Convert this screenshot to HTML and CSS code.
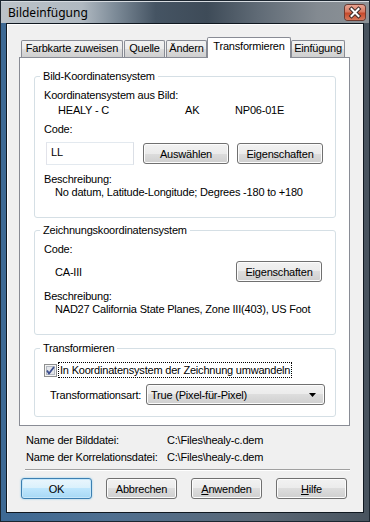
FILE: index.html
```html
<!DOCTYPE html>
<html lang="de">
<head>
    <meta charset="UTF-8">
    <title>Bildeinfügung</title>
    <link rel="stylesheet" href="styles.css">
</head>
<body>
<div class="window">
    <div class="titlebar">
        <span class="title">Bildeinfügung</span>
        <span class="close">
            <svg width="20" height="15" viewBox="0 0 20 15">
                <path d="M6.5 4 L13.5 11 M13.5 4 L6.5 11" stroke="#3a2a28" stroke-width="4" stroke-linecap="square"/>
                <path d="M6.5 4 L13.5 11 M13.5 4 L6.5 11" stroke="#fff" stroke-width="2" stroke-linecap="square"/>
            </svg>
        </span>
    </div>

    <div class="client">
        <div class="tabs">
            <div class="tab t1">Farbkarte zuweisen</div>
            <div class="tab t2">Quelle</div>
            <div class="tab t3">Ändern</div>
            <div class="tab active">Transformieren</div>
            <div class="tab t5">Einfügung</div>
        </div>

        <div class="panel">
            <fieldset class="group g1">
                <legend>Bild-Koordinatensystem</legend>
                <div class="line first">Koordinatensystem aus Bild:</div>
                <div class="line source">
                    <span class="src-name">HEALY - C</span>
                    <span class="src-state">AK</span>
                    <span>NP06-01E</span>
                </div>
                <div class="line code">Code:</div>
                <div class="row">
                    <div class="edit">LL</div>
                    <div class="btn pick">Auswählen</div>
                    <div class="btn props">Eigenschaften</div>
                </div>
                <div class="line desc">Beschreibung:</div>
                <div class="line indent">No datum, Latitude-Longitude; Degrees -180 to +180</div>
            </fieldset>

            <fieldset class="group g2">
                <legend>Zeichnungskoordinatensystem</legend>
                <div class="line first">Code:</div>
                <div class="row code-row">
                    <span class="code-value">CA-III</span>
                    <div class="btn props">Eigenschaften</div>
                </div>
                <div class="line desc">Beschreibung:</div>
                <div class="line indent">NAD27 California State Planes, Zone III(403), US Foot</div>
            </fieldset>

            <fieldset class="group g3">
                <legend>Transformieren</legend>
                <div class="check-row">
                    <svg class="checkbox" width="13" height="13" viewBox="0 0 13 13">
                        <rect x="0.5" y="0.5" width="12" height="12" fill="#f4f4f4" stroke="#8e8f8f"/>
                        <rect x="2.5" y="2.5" width="8" height="8" fill="#e4e6ea" stroke="#b4b9c1"/>
                        <path d="M3 6.5 L5 9.5 L10 3" fill="none" stroke="#3d4f8f" stroke-width="1.8"/>
                    </svg>
                    <span class="check-label">In Koordinatensystem der Zeichnung umwandeln</span>
                </div>
                <div class="select-row">
                    <span class="select-label">Transformationsart:</span>
                    <div class="select">
                        <span>True (Pixel-für-Pixel)</span>
                        <svg width="7" height="4" viewBox="0 0 7 4"><path d="M0 0 H7 L3.5 4 Z" fill="#000"/></svg>
                    </div>
                </div>
            </fieldset>
        </div>

        <div class="files">
            <div class="file-row"><span class="file-key">Name der Bilddatei:</span><span>C:\Files\healy-c.dem</span></div>
            <div class="file-row"><span class="file-key">Name der Korrelationsdatei:</span><span>C:\Files\healy-c.dem</span></div>
        </div>

        <div class="sep"></div>

        <div class="buttons">
            <div class="btn dlg default">OK</div>
            <div class="btn dlg">Abbrechen</div>
            <div class="btn dlg"><u>A</u>nwenden</div>
            <div class="btn dlg"><u>H</u>ilfe</div>
        </div>
    </div>
</div>
</body>
</html>
```

FILE: styles.css
```css
body { margin: 0; font-family: "Liberation Sans", Arial, sans-serif; font-size: 11px; letter-spacing: -0.2px; color: #000; }

.window { box-sizing: border-box; width: 370px; height: 522px; border: 1px solid #1c2630; padding: 0 5px 8px; display: flex; flex-direction: column; background: linear-gradient(90deg, #3d6994 0%, #4f6f90 30%, #5b6876 70%, #48535e 100%); }

.titlebar { height: 22px; margin: 0 -5px; padding: 0 4px 0 7px; display: flex; align-items: center; justify-content: space-between; background: linear-gradient(90deg, #bcc3c9 0%, #b0b9c1 22%, #7d8b98 31%, #455463 42%, #3e4b58 56%, #606b76 70%, #838a91 86%, #8c9297 100%); box-shadow: inset 0 1px #d6dbe0; }
.title { font-family: "Noto Sans", sans-serif; font-size: 12px; letter-spacing: 0; color: #000; margin-top: 1px; }
.close { display: flex; width: 20px; height: 15px; margin-top: 1px; border-radius: 3px; background: linear-gradient(#e9a593 0%, #d87a62 45%, #c74a2c 55%, #d7775a 100%); box-shadow: 0 0 0 1px #6e3a30; }

.client { flex: 1; border: 1px solid #101820; background: #f0f0f0; display: flex; flex-direction: column; box-shadow: inset 1px 1px #fff; }

.tabs { display: flex; align-items: flex-end; height: 20px; margin: 13px 0 0 14px; }
.tab { box-sizing: border-box; height: 17px; border: 1px solid #898c95; border-bottom: 0; border-radius: 2px 2px 0 0; text-align: center; line-height: 15px; background: linear-gradient(#f2f2f2 0%, #ebebeb 50%, #dddddd 50%, #cfcfcf 100%); }
.t1 { width: 102px; margin-right: 1px; }
.t2 { width: 41px; margin-right: 1px; }
.t3 { width: 41px; }
.t5 { width: 54px; }
.tab.active { width: 84px; height: 21px; margin-bottom: -1px; background: #fff; position: relative; z-index: 1; line-height: 16px; }

.panel { margin: 0 13px 0 12px; border: 1px solid #898c95; background: #fff; padding: 11px 13px 8px 14px; }

.group { margin: 0; padding: 0 9px; border: 1px solid #d5dfe5; border-radius: 3px; }
.group legend { padding: 0 3px; margin-left: -4px; line-height: 14px; }
.g1 { padding-bottom: 18px; }
.g2 { margin-top: 5px; padding-bottom: 18px; }
.g3 { margin-top: 6px; padding-bottom: 11px; }

.line { line-height: 13px; }
.g1 .first { margin-top: 6px; }
.source { display: flex; margin-top: 2px; padding-left: 14px; }
.src-name { width: 127px; }
.src-state { width: 50px; }
.code { margin-top: 6px; }
.desc { margin-top: 8px; }
.indent { padding-left: 11px; }

.row { display: flex; align-items: center; margin-top: 6px; }
.edit { box-sizing: border-box; width: 88px; height: 23px; margin-left: 2px; padding: 3px 0 0 4px; border: 1px solid #e3e9ef; border-left-color: #e2e3ea; border-right-color: #dbdfe6; background: #fff; }
.btn { box-sizing: border-box; height: 21px; border: 1px solid #707070; border-radius: 3px; display: flex; align-items: center; justify-content: center; background: linear-gradient(#f2f2f2 0%, #ebebeb 50%, #dddddd 50%, #cfcfcf 100%); box-shadow: inset 0 0 0 1px #fcfcfc; }
.pick { width: 86px; margin-left: 9px; }
.props { width: 86px; margin-left: 8px; }

.g2 .first { margin-top: 6px; }
.code-row { margin-top: 5px; justify-content: space-between; padding-left: 11px; }
.code-row .props { margin-right: 4px; }

.check-row { display: flex; align-items: center; margin-top: 7px; height: 16px; }
.checkbox { display: block; }
.check-label { margin-left: 2px; padding: 0 1px; line-height: 14px; outline: 1px dotted #000; }
.select-row { display: flex; align-items: center; margin-top: 6px; padding-left: 6px; }
.select-label { width: 96px; }
.select { box-sizing: border-box; width: 179px; height: 21px; padding: 0 8px 0 4px; border: 1px solid #707070; border-radius: 3px; display: flex; align-items: center; justify-content: space-between; background: linear-gradient(#f2f2f2 0%, #ebebeb 50%, #dddddd 50%, #cfcfcf 100%); box-shadow: inset 0 0 0 1px #fcfcfc; }

.files { margin: 8px 0 0 19px; }
.file-row { display: flex; line-height: 13px; margin-bottom: 4px; }
.file-key { width: 141px; }

.sep { height: 1px; margin: 1px 13px 0 18px; background: #a0a0a0; box-shadow: 0 1px #fff; }

.buttons { display: flex; gap: 14px; margin: 8px 0 0 14px; }
.dlg { width: 71px; }
.default { border-color: #3c7fb1; background: linear-gradient(#eaf6fd 0%, #d9f0fc 50%, #bee6fd 50%, #a7d9f5 100%); box-shadow: inset 0 0 0 1px #c6e7fa, 0 0 2px #7ec4ea; }
```
